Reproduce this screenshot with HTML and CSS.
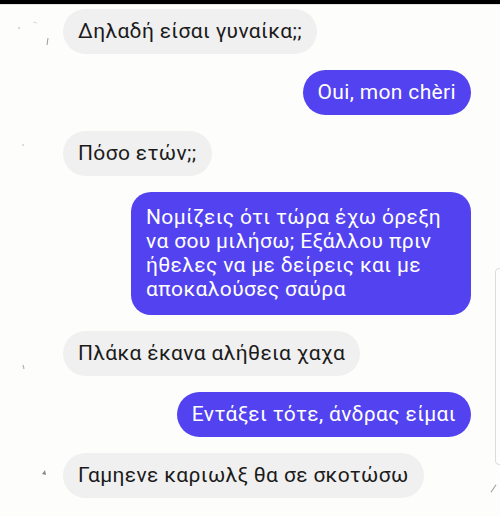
FILE: index.html
```html
<!DOCTYPE html>
<html lang="el">
<head>
    <meta charset="UTF-8">
    <title>Chat</title>
    <link rel="stylesheet" href="styles.css">
</head>
<body>
    <div class="topbar"></div>
    <div class="chat">
        <div class="row in">
            <div class="avatar">
                <svg width="63" height="45" viewBox="0 0 63 45"><circle cx="19" cy="19" r="1" fill="#c8c8c8"/><path d="M33 13 l4 1" stroke="#d8d8d8" stroke-width="1"/><path d="M48 29 l-1 7" stroke="#9a9a9a" stroke-width="1"/></svg>
            </div>
            <div class="bubble">Δηλαδή είσαι γυναίκα;;</div>
        </div>
        <div class="row out">
            <div class="bubble">Oui, mon chèri</div>
        </div>
        <div class="row in">
            <div class="avatar">
                <svg width="63" height="45" viewBox="0 0 63 45"><circle cx="23" cy="14" r="1" fill="#d0d0d0"/></svg>
            </div>
            <div class="bubble">Πόσο ετών;;</div>
        </div>
        <div class="row out">
            <div class="bubble multi">Νομίζεις ότι τώρα έχω όρεξη<br>να σου μιλήσω; Εξάλλου πριν<br>ήθελες να με δείρεις και με<br>αποκαλούσες σαύρα</div>
        </div>
        <div class="row in">
            <div class="avatar">
                <svg width="63" height="45" viewBox="0 0 63 45"><path d="M23 34 l1 4" stroke="#b0b0b0" stroke-width="1.2"/></svg>
            </div>
            <div class="bubble">Πλάκα έκανα αλήθεια χαχα</div>
        </div>
        <div class="row out">
            <div class="bubble">Εντάξει τότε, άνδρας είμαι</div>
        </div>
        <div class="row in">
            <div class="avatar">
                <svg width="63" height="45" viewBox="0 0 63 45"><path d="M42 21 l3 -4 l1 5 z" fill="#8a8a8a"/></svg>
            </div>
            <div class="bubble">Γαμηενε καριωλξ θα σε σκοτώσω</div>
        </div>
    </div>
    <div class="side-panel"></div>
    <div class="side-mark"></div>
</body>
</html>
```

FILE: styles.css
```css
body {
    margin: 0;
    background: #fdfdfc;
    font-family: Roboto, "Noto Sans", sans-serif;
    width: 500px;
    height: 516px;
    overflow: hidden;
    position: relative;
}
.topbar {
    height: 4px;
    background: #000;
    border-bottom: 1px solid #e4e4e4;
}
.chat {
    display: flex;
    flex-direction: column;
    gap: 16px;
    padding-top: 4px;
}
.row {
    display: flex;
}
.row.out {
    justify-content: flex-end;
    padding-right: 29px;
}
.avatar {
    width: 63px;
    height: 45px;
    flex-shrink: 0;
}
.avatar svg {
    display: block;
}
.bubble {
    font-size: 21px;
    letter-spacing: 0.35px;
    line-height: 25px;
    padding: 10px 15px;
    border-radius: 23px;
    white-space: nowrap;
}
.in .bubble {
    background: #f0f0f0;
    color: #1b1b1b;
}
.out .bubble {
    background: #5242f0;
    color: #fff;
}
.bubble.multi {
    width: 310px;
    line-height: 24px;
    padding: 13px 15px 14px;
    border-radius: 20px;
}
.side-panel {
    position: absolute;
    left: 495px;
    top: 268px;
    width: 20px;
    height: 195px;
    border: 1px solid #dcdcdc;
    border-radius: 4px;
}
.side-mark {
    position: absolute;
    left: 493px;
    top: 484px;
    width: 1px;
    height: 9px;
    background: #9a9a9a;
    transform: rotate(35deg);
}
```
